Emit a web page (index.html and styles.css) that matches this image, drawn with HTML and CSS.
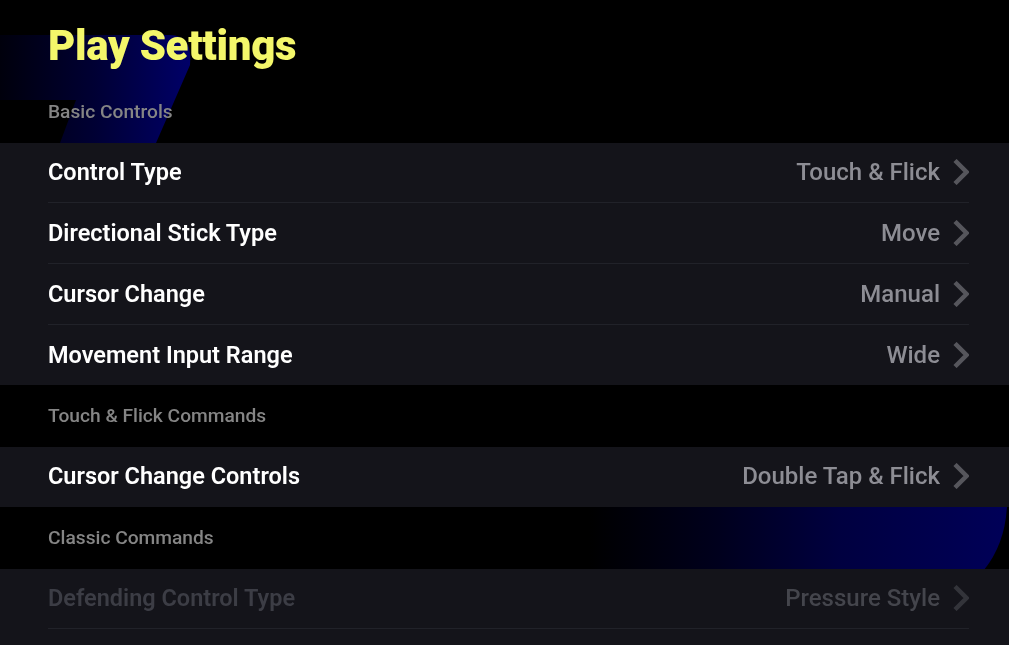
FILE: index.html
```html
<!DOCTYPE html>
<html lang="en">
<head>
<meta charset="utf-8">
<title>Play Settings</title>
<link rel="stylesheet" href="styles.css">
</head>
<body>
<div class="screen">
  <svg class="deco deco-top" width="200" height="110" viewBox="0 0 200 110" aria-hidden="true">
    <defs>
      <linearGradient id="fadeTop" x1="0" x2="1" y1="0" y2="0">
        <stop offset="0" stop-color="#00000c"/>
        <stop offset="0.5" stop-color="#000034"/>
        <stop offset="1" stop-color="#000068"/>
      </linearGradient>
    </defs>
    <path d="M0 0H170Q193 0 190 30L156 108H60L76 65H0Z" fill="url(#fadeTop)"/>
  </svg>
  <svg class="deco deco-bottom" width="420" height="64" viewBox="0 0 420 64" aria-hidden="true">
    <defs>
      <linearGradient id="fadeBottom" x1="0" x2="1" y1="0" y2="0">
        <stop offset="0" stop-color="#000000"/>
        <stop offset="0.3" stop-color="#00001c"/>
        <stop offset="0.6" stop-color="#000040"/>
        <stop offset="1" stop-color="#000058"/>
      </linearGradient>
    </defs>
    <path d="M0 0H418Q416 38 395 64H0Z" fill="url(#fadeBottom)"/>
  </svg>

  <main class="content">
    <h1 class="title">Play Settings</h1>
    <h2 class="section section-first">Basic Controls</h2>
    <section class="panel">
      <div class="row"><span class="label">Control Type</span><span class="value">Touch &amp; Flick</span><svg class="chev" width="18" height="26" viewBox="0 0 18 26"><path d="M4 1.5 15.5 13 4 24.5"/></svg></div>
      <div class="row"><span class="label">Directional Stick Type</span><span class="value">Move</span><svg class="chev" width="18" height="26" viewBox="0 0 18 26"><path d="M4 1.5 15.5 13 4 24.5"/></svg></div>
      <div class="row"><span class="label">Cursor Change</span><span class="value">Manual</span><svg class="chev" width="18" height="26" viewBox="0 0 18 26"><path d="M4 1.5 15.5 13 4 24.5"/></svg></div>
      <div class="row row-last"><span class="label">Movement Input Range</span><span class="value">Wide</span><svg class="chev" width="18" height="26" viewBox="0 0 18 26"><path d="M4 1.5 15.5 13 4 24.5"/></svg></div>
    </section>
    <h2 class="section">Touch &amp; Flick Commands</h2>
    <section class="panel">
      <div class="row row-last"><span class="label">Cursor Change Controls</span><span class="value">Double Tap &amp; Flick</span><svg class="chev" width="18" height="26" viewBox="0 0 18 26"><path d="M4 1.5 15.5 13 4 24.5"/></svg></div>
    </section>
    <h2 class="section">Classic Commands</h2>
    <section class="panel panel-end">
      <div class="row disabled"><span class="label">Defending Control Type</span><span class="value">Pressure Style</span><svg class="chev" width="18" height="26" viewBox="0 0 18 26"><path d="M4 1.5 15.5 13 4 24.5"/></svg></div>
    </section>
  </main>
</div>
</body>
</html>
```
FILE: styles.css
```css
* { box-sizing: border-box; margin: 0; padding: 0; }
html, body { height: 100%; background: #000; overflow: hidden; }
.screen {
  position: relative;
  width: 1009px;
  height: 645px;
  overflow: hidden;
  background: #000;
  font-family: Roboto, sans-serif;
}
.deco { position: absolute; }
.deco-top { left: 0; top: 35px; }
.deco-bottom { left: 589px; top: 506px; }
.content { position: relative; display: flex; flex-direction: column; }
.title {
  height: 81px;
  padding: 21px 0 0 48px;
  font-family: Roboto, sans-serif;
  font-size: 42px;
  line-height: 50px;
  font-weight: 900;
  letter-spacing: -0.3px;
  color: #f4f76a;
  filter: blur(0.4px);
}
.section {
  height: 62px;
  padding: 0 0 2px 48px;
  display: flex;
  align-items: center;
  font-size: 19.2px;
  font-weight: 500;
  color: #858585;
  filter: blur(0.3px);
}
.panel { background: #14141a; padding-left: 48px; padding-right: 40px; }
.panel-end { height: 76px; }
.row {
  height: 61px;
  display: flex;
  align-items: center;
  border-bottom: 1px solid #212229;
}
.row-last { height: 60px; padding-bottom: 1px; border-bottom: 0; }
.row:first-child { height: 60px; padding-bottom: 2px; }
.label { font-size: 23.5px; font-weight: 600; color: #fff; filter: blur(0.3px); }
.value { margin-left: auto; font-size: 24px; font-weight: 500; color: #8d8d94; filter: blur(0.3px); }
.chev { margin-left: 11px; fill: none; stroke: #56565c; stroke-width: 4.5; flex: none; filter: blur(0.3px); }
.disabled .label { color: #3c3d45; }
.disabled .value { color: #44454c; }
.disabled .chev { stroke: #33343a; }
```
